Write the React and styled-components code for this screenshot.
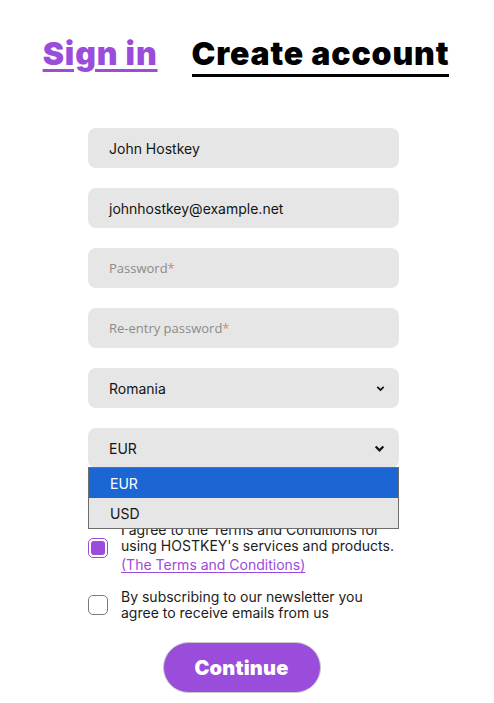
import React from 'react';
import styled, { createGlobalStyle } from 'styled-components';

const purple = '#9a4cdb';

const GlobalStyle = createGlobalStyle`
  html, body {
    margin: 0;
    padding: 0;
    background: #ffffff;
  }
  body {
    font-family: Inter, "Liberation Sans", Arial, sans-serif;
    color: #111;
  }
`;

const Page = styled.div`
  width: 494px;
  min-height: 703px;
  display: flex;
  flex-direction: column;
`;

const Tabs = styled.nav`
  margin-top: 34px;
  display: flex;
  justify-content: center;
  gap: 34px;
  padding-right: 2px;
`;

const Tab = styled.a`
  font-family: Inter, "Liberation Sans", sans-serif;
  font-size: 32px;
  font-weight: 900;
  line-height: 40px;
  letter-spacing: 0.85px;
  cursor: pointer;
  color: ${p => (p.$active ? '#000' : purple)};
  text-decoration: ${p => (p.$active ? 'none' : 'underline')};
  text-decoration-thickness: 3px;
  text-underline-offset: 4px;
  border-bottom: ${p => (p.$active ? '3px solid #000' : 'none')};
`;

const Form = styled.form`
  position: relative;
  width: 311px;
  margin: 51px 0 0 88px;
  display: flex;
  flex-direction: column;
`;

const Fields = styled.div`
  display: flex;
  flex-direction: column;
  gap: 20px;
`;

const Field = styled.div`
  height: 40px;
  box-sizing: border-box;
  padding: 0 14px 0 21px;
  border-radius: 8px;
  background: #e6e6e6;
  display: flex;
  align-items: center;
  justify-content: space-between;
  font-size: 14px;
  color: #141414;
`;

const Placeholder = styled.span`
  font-family: "Open Sans", "Liberation Sans", sans-serif;
  font-size: 13px;
  color: #8b8b8b;

  & b {
    font-weight: 400;
    color: #e0806f;
  }
`;

const Chevron = ({ size }) => (
  <svg width={size} height={size} viewBox="0 0 10 10" aria-hidden="true">
    <path d="M1.5 3.2 L5 6.7 L8.5 3.2" fill="none" stroke="#111" strokeWidth="2" />
  </svg>
);

const Options = styled.ul`
  position: absolute;
  left: 0;
  right: 0;
  top: 339px;
  margin: 0;
  padding: 0;
  list-style: none;
  border: 1px solid #6e6e6e;
  background: #e6e6e6;
  z-index: 2;
`;

const Option = styled.li`
  height: 30px;
  padding-left: 21px;
  display: flex;
  align-items: center;
  font-size: 14px;
  background: ${p => (p.$selected ? '#1b66d2' : '#e6e6e6')};
  color: ${p => (p.$selected ? '#fff' : '#141414')};
`;

const Checks = styled.div`
  margin-top: 54px;
  display: flex;
  flex-direction: column;
  gap: 16px;
`;

const CheckRow = styled.label`
  display: flex;
  align-items: center;
  gap: 13px;
`;

const Box = styled.span`
  flex: none;
  width: 20px;
  height: 20px;
  box-sizing: border-box;
  border-radius: 5px;
  border: 1.5px solid ${p => (p.$checked ? purple : '#7a7a7a')};
  padding: 2px;
  background: #fff;

  &::after {
    content: '';
    display: ${p => (p.$checked ? 'block' : 'none')};
    width: 100%;
    height: 100%;
    border-radius: 3px;
    background: ${purple};
  }
`;

const CheckText = styled.span`
  font-size: 14px;
  line-height: 16px;
  color: #1c1c1c;
`;

const TermsLink = styled.a`
  display: block;
  margin-top: 3px;
  color: ${purple};
  text-decoration: underline;
  text-underline-offset: 2px;
`;

const Continue = styled.button`
  align-self: center;
  margin: 21px 0 0 -4px;
  width: 158px;
  height: 51px;
  border-radius: 26px;
  border: 1px solid #c9c9c9;
  background: ${purple};
  color: #fff;
  font-family: Inter, "Liberation Sans", sans-serif;
  font-size: 20px;
  font-weight: 900;
  letter-spacing: 0.2px;
  cursor: pointer;
`;

export default function App() {
  return (
    <Page>
      <GlobalStyle />
      <Tabs>
        <Tab>Sign in</Tab>
        <Tab $active>Create account</Tab>
      </Tabs>
      <Form onSubmit={e => e.preventDefault()}>
        <Fields>
          <Field>John Hostkey</Field>
          <Field>johnhostkey@example.net</Field>
          <Field>
            <Placeholder>Password<b>*</b></Placeholder>
          </Field>
          <Field>
            <Placeholder>Re-entry password<b>*</b></Placeholder>
          </Field>
          <Field>
            Romania
            <Chevron size={9} />
          </Field>
          <Field>
            EUR
            <Chevron size={11} />
          </Field>
        </Fields>
        <Options>
          <Option $selected>EUR</Option>
          <Option>USD</Option>
        </Options>
        <Checks>
          <CheckRow>
            <Box $checked />
            <CheckText>
              I agree to the Terms and Conditions for using HOSTKEY's services and products.
              <TermsLink>(The Terms and Conditions)</TermsLink>
            </CheckText>
          </CheckRow>
          <CheckRow>
            <Box />
            <CheckText>By subscribing to our newsletter you agree to receive emails from us</CheckText>
          </CheckRow>
        </Checks>
        <Continue type="submit">Continue</Continue>
      </Form>
    </Page>
  );
}
